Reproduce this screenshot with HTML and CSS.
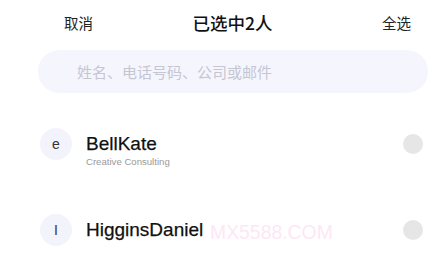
FILE: index.html
```html
<!DOCTYPE html>
<html lang="zh">
<head>
<meta charset="utf-8">
<link rel="stylesheet" href="styles.css">
</head>
<body>
<div class="page">
  <header class="header">
    <span class="hbtn">取消</span>
    <span class="title">已选中2人</span>
    <span class="hbtn">全选</span>
  </header>
  <div class="search">
    <span class="placeholder">姓名、电话号码、公司或邮件</span>
  </div>
  <ul class="list">
    <li class="row">
      <div class="avatar">e</div>
      <div class="info">
        <div class="name">BellKate</div>
        <div class="company">Creative Consulting</div>
      </div>
      <div class="check"></div>
    </li>
    <li class="row">
      <div class="avatar">I</div>
      <div class="info">
        <div class="name">HigginsDaniel</div>
      </div>
      <div class="check"></div>
    </li>
  </ul>
  <div class="watermark">MX5588.COM</div>
</div>
</body>
</html>
```

FILE: styles.css
```css
* { box-sizing: border-box; }
html, body { margin: 0; padding: 0; background: #fff; }
body {
  font-family: "Liberation Sans", "Noto Sans CJK SC", sans-serif;
  color: #1a1a1a;
  width: 444px;
  height: 254px;
  overflow: hidden;
}
.page { position: relative; height: 254px; overflow: hidden; }
.header {
  height: 44px;
  display: flex;
  align-items: center;
  justify-content: space-between;
  padding: 0 33px 0 64px;
}
.hbtn {
  font-family: "Noto Sans CJK SC", sans-serif;
  font-size: 14.5px;
  color: #222;
}
.title {
  font-family: "Noto Sans CJK SC", sans-serif;
  font-size: 17.5px;
  font-weight: 500;
  color: #111;
  margin-right: 10px;
}
.search {
  margin: 6px 16px 0 38px;
  height: 43px;
  border-radius: 22px;
  background: #f5f5fd;
  display: flex;
  align-items: center;
  padding-left: 39px;
}
.placeholder {
  font-family: "Noto Sans CJK SC", sans-serif;
  font-size: 15px;
  color: #c6c6d2;
}
.list { list-style: none; margin: 0; padding: 35px 21px 0 40px; }
.row {
  display: flex;
  align-items: flex-start;
  height: 86px;
}
.row:last-child { height: 32px; }
.avatar {
  width: 32px;
  height: 32px;
  border-radius: 50%;
  background: #f3f3fb;
  display: flex;
  align-items: center;
  justify-content: center;
  font-size: 14px;
  color: #333;
  flex: none;
}
.info { flex: 1; margin-left: 14px; }
.name { font-size: 19px; line-height: 32px; color: #111; -webkit-text-stroke: 0.25px #111; }
.company { font-size: 9.6px; line-height: 14px; color: #9a9a9a; margin-top: -5px; }
.check {
  width: 20px;
  height: 20px;
  border-radius: 50%;
  background: #e6e6e6;
  margin-top: 6px;
  flex: none;
}
.watermark {
  position: absolute;
  left: 210px;
  top: 221px;
  font-size: 19.4px;
  color: #fde7f7;
  pointer-events: none;
}
```
